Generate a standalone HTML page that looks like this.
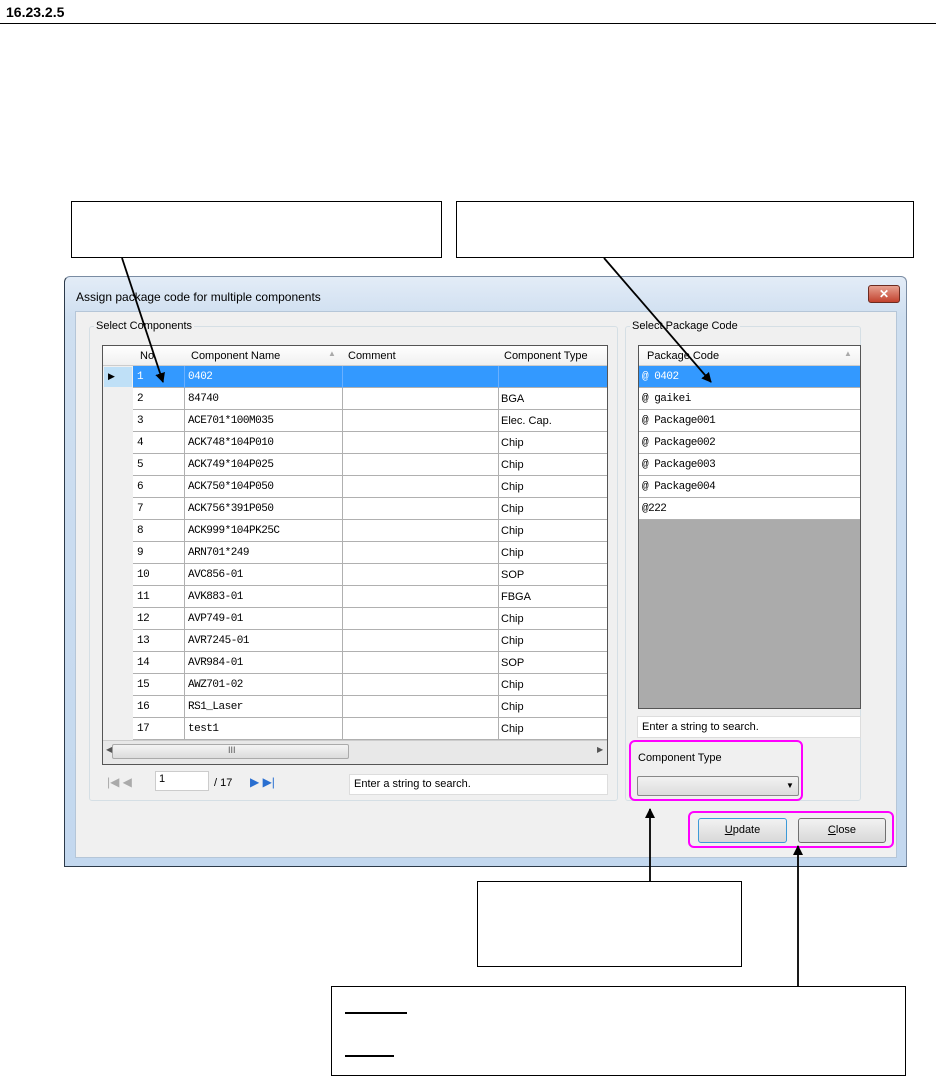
<!DOCTYPE html>
<html><head><style>
body{margin:0;width:941px;height:1077px;background:#fff;position:relative;overflow:hidden;font-family:"Liberation Sans",sans-serif;}
.a{position:absolute;box-sizing:border-box;}
.t{font-size:11px;color:#000;white-space:nowrap;}
.m{font-family:"Liberation Mono",monospace;font-size:11px;letter-spacing:-0.5px;}
.box{border:1px solid #000;background:#fff;}
</style></head><body>
<div class="a" style="left:6px;top:4px;font-weight:bold;font-size:14px;">16.23.2.5</div>
<div class="a" style="left:0;top:23px;width:936px;height:1px;background:#000"></div>
<div class="a box" style="left:71px;top:201px;width:371px;height:57px"></div>
<div class="a box" style="left:456px;top:201px;width:458px;height:57px"></div>

<!-- dialog -->
<div class="a" style="left:64px;top:276px;width:843px;height:591px;background:linear-gradient(#e3ecf7,#cfdff0 40px,#c3d8ef);border:1px solid #2c3a4a;border-top-color:#7a8ca3;border-right-color:#7a8ca3;border-radius:6px 6px 0 0"></div>
<div class="a t" style="left:76px;top:290px;font-size:12px">Assign package code for multiple components</div>
<div class="a" style="left:868px;top:285px;width:32px;height:18px;background:linear-gradient(#e7a190,#c2422e);border:1px solid #6c2b20;border-radius:3px;color:#fff;font-size:12px;font-weight:bold;text-align:center;line-height:16px">✕</div>
<div class="a" style="left:75px;top:311px;width:822px;height:547px;background:#f0f0f0;border:1px solid #b5c6d8"></div>

<!-- group 1 -->
<div class="a" style="left:89px;top:326px;width:529px;height:475px;border:1px solid #d5dfe5;border-radius:3px"></div>
<div class="a t" style="left:94px;top:320px;background:#f0f0f0;padding:0 2px">Select Components</div>
<div class="a" style="left:102px;top:345px;width:506px;height:420px;border:1px solid #555;background:#fff"></div>
<div class="a" style="left:103px;top:346px;width:504px;height:20px;background:linear-gradient(#fff,#f0f0f0);border-bottom:1px solid #ccc"></div>
<div class="a t" style="left:140px;top:350px">No.</div>
<div class="a t" style="left:191px;top:350px">Component Name</div>
<div class="a t" style="left:328px;top:349px;color:#aaa;font-size:8px">▲</div>
<div class="a t" style="left:348px;top:350px">Comment</div>
<div class="a t" style="left:504px;top:350px">Component Type</div>
<div class="a" style="left:103px;top:366px;width:30px;height:374px;background:#f0f0f0"></div>
<div id="rows"></div>
<div class="a" style="left:103px;top:740px;width:504px;height:24px;background:#e8e8e8;border-top:1px solid #ccc"></div>
<div class="a" style="left:112px;top:744px;width:237px;height:15px;background:linear-gradient(#f4f4f4,#dcdcdc);border:1px solid #aaa;border-radius:2px"></div>
<div class="a t" style="left:228px;top:745px;font-size:9px;color:#555">III</div>
<div class="a t" style="left:106px;top:745px;font-size:8px;color:#555">◀</div>
<div class="a t" style="left:597px;top:745px;font-size:8px;color:#555">▶</div>
<!-- nav -->
<div class="a t" style="left:107px;top:775px;color:#aaa;font-size:12px">|◀ ◀</div>
<div class="a" style="left:155px;top:771px;width:54px;height:20px;background:#fff;border:1px solid #ccc"></div>
<div class="a t" style="left:159px;top:773px">1</div>
<div class="a t" style="left:214px;top:777px">/ 17</div>
<div class="a t" style="left:250px;top:775px;color:#2a6fd0;font-size:12px">▶ ▶|</div>
<div class="a" style="left:349px;top:774px;width:259px;height:21px;background:#fff;border:1px solid #ddd"></div>
<div class="a t" style="left:354px;top:778px">Enter a string to search.</div>

<!-- group 2 -->
<div class="a" style="left:625px;top:326px;width:236px;height:475px;border:1px solid #d5dfe5;border-radius:3px"></div>
<div class="a t" style="left:630px;top:320px;background:#f0f0f0;padding:0 2px">Select Package Code</div>
<div class="a" style="left:638px;top:345px;width:223px;height:364px;border:1px solid #555;background:#ababab"></div>
<div class="a" style="left:639px;top:346px;width:221px;height:20px;background:linear-gradient(#fff,#f0f0f0);border-bottom:1px solid #ccc"></div>
<div class="a t" style="left:647px;top:350px">Package Code</div>
<div class="a t" style="left:844px;top:349px;color:#aaa;font-size:8px">▲</div>
<div id="prows"></div>
<div class="a" style="left:637px;top:716px;width:224px;height:22px;background:#fff;border:1px solid #ddd"></div>
<div class="a t" style="left:642px;top:721px">Enter a string to search.</div>
<div class="a" style="left:629px;top:740px;width:174px;height:61px;border:2px solid #ff00ff;border-radius:6px"></div>
<div class="a t" style="left:638px;top:752px">Component Type</div>
<div class="a" style="left:637px;top:776px;width:162px;height:20px;background:linear-gradient(#f2f2f2,#dcdcdc);border:1px solid #888;border-radius:2px"></div>
<div class="a t" style="left:786px;top:781px;font-size:8px">▼</div>
<div class="a" style="left:688px;top:811px;width:206px;height:37px;border:2px solid #ff00ff;border-radius:6px"></div>
<div class="a" style="left:698px;top:818px;width:89px;height:25px;background:linear-gradient(#f2f2f2,#d8d8d8);border:1px solid #3c9ad8;border-radius:3px;font-size:11px;text-align:center;line-height:23px"><u>U</u>pdate</div>
<div class="a" style="left:798px;top:818px;width:88px;height:25px;background:linear-gradient(#f2f2f2,#d8d8d8);border:1px solid #707070;border-radius:3px;font-size:11px;text-align:center;line-height:23px"><u>C</u>lose</div>

<div class="a box" style="left:477px;top:881px;width:265px;height:86px"></div>
<div class="a box" style="left:331px;top:986px;width:575px;height:90px"></div>
<div class="a" style="left:345px;top:1012px;width:62px;height:2px;background:#000"></div>
<div class="a" style="left:345px;top:1055px;width:49px;height:2px;background:#000"></div>

<svg class="a" style="left:0;top:0" width="941" height="1077">
<defs><marker id="ar" markerWidth="10" markerHeight="10" refX="9" refY="5" orient="auto" markerUnits="userSpaceOnUse"><path d="M0,0 L10,5 L0,10 z" fill="#000"/></marker></defs>
<g stroke="#000" stroke-width="1.8" fill="none" marker-end="url(#ar)">
<line x1="122" y1="258" x2="163" y2="382"/>
<line x1="604" y1="258" x2="711" y2="382"/>
<line x1="650" y1="881" x2="650" y2="809"/>
<line x1="798" y1="986" x2="798" y2="846"/>
</g></svg>

<script>
var d=[["1","0402",""],["2","84740","BGA"],["3","ACE701*100M035","Elec. Cap."],["4","ACK748*104P010","Chip"],["5","ACK749*104P025","Chip"],["6","ACK750*104P050","Chip"],["7","ACK756*391P050","Chip"],["8","ACK999*104PK25C","Chip"],["9","ARN701*249","Chip"],["10","AVC856-01","SOP"],["11","AVK883-01","FBGA"],["12","AVP749-01","Chip"],["13","AVR7245-01","Chip"],["14","AVR984-01","SOP"],["15","AWZ701-02","Chip"],["16","RS1_Laser","Chip"],["17","test1","Chip"]];
var h="";
d.forEach(function(r,i){var y=366+i*22,s=i==0;
h+='<div class="a" style="left:133px;top:'+y+'px;width:474px;height:22px;background:'+(s?'#3399ff':'#fff')+';border-bottom:1px solid #b0b0b0"></div>';
[184,342,498].forEach(function(x){h+='<div class="a" style="left:'+x+'px;top:'+y+'px;width:1px;height:22px;background:'+(s?'#6ab0ff':'#b0b0b0')+'"></div>'});
h+='<div class="a m" style="left:137px;top:'+(y+5)+'px;color:'+(s?'#fff':'#000')+'">'+r[0]+'</div>';
h+='<div class="a m" style="left:188px;top:'+(y+5)+'px;color:'+(s?'#fff':'#000')+'">'+r[1]+'</div>';
h+='<div class="a t" style="left:501px;top:'+(y+5)+'px">'+r[2]+'</div>';});
h+='<div class="a" style="left:104px;top:367px;width:28px;height:20px;background:#bfe0f7"></div><div class="a t" style="left:108px;top:371px;font-size:9px">▶</div>';
document.getElementById("rows").innerHTML=h;
var p=["@ 0402","@ gaikei","@ Package001","@ Package002","@ Package003","@ Package004","@222"];h="";
p.forEach(function(t,i){var y=366+i*22,s=i==0;
h+='<div class="a" style="left:639px;top:'+y+'px;width:221px;height:22px;background:'+(s?'#3399ff':'#fff')+';border-bottom:1px solid #b0b0b0"></div><div class="a m" style="left:642px;top:'+(y+5)+'px;color:'+(s?'#fff':'#000')+'">'+t+'</div>';});
document.getElementById("prows").innerHTML=h;
</script>
</body></html>
